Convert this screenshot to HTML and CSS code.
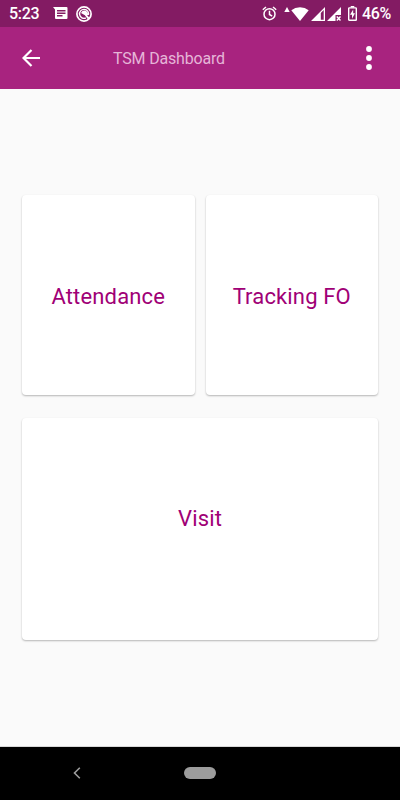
FILE: index.html
```html
<!DOCTYPE html>
<html lang="en">
<head>
  <meta charset="utf-8">
  <meta name="viewport" content="width=device-width, initial-scale=1">
  <title>TSM Dashboard</title>
  <link rel="stylesheet" href="styles.css">
</head>
<body>
  <div class="status-bar">
    <span class="time">5:23</span>
    <svg class="icon-message" width="15" height="13" viewBox="0 0 15 13">
      <path fill="#fff" fill-rule="evenodd" d="M0 0h13.5q1 0 1 1v10q0 1-1 1H3q-1 0-1-1V2.500zM4 3v1.400h8.500V3zM4 5.500v1.400h8.500V5.500zM4 8v1.400h5.500V8z"/>
    </svg>
    <svg class="icon-target" width="16" height="16" viewBox="0 0 16 16" fill="none" stroke="#fff">
      <circle cx="8" cy="8" r="7.100" stroke-width="1.700"/>
      <path d="M9.800 12A4.500 4.500 0 1 1 12.400 9" stroke-width="1.400"/>
      <path d="M5 7Q6.500 4 9.500 4.700q2.800 1.200 2.500 4.300H8.500zM8 8l1.500-1 4 5-1.500 1.500z" fill="#fff" stroke="none"/>
    </svg>

    <div class="status-right">
      <svg class="icon-alarm" width="15" height="15" viewBox="0 0 15 15" fill="none" stroke="#fff" stroke-width="1.500">
        <circle cx="7.500" cy="8.200" r="5.500"/>
        <path d="M7.500 4.800v3.700l2.700 1.600M.8 3.700L4 1M14.200 3.700L11 1"/>
      </svg>
      <svg class="icon-up" width="6" height="5" viewBox="0 0 6 5">
        <path fill="#fff" d="M3 0l2.700 5H.3z"/>
      </svg>
      <svg class="icon-wifi" width="18" height="14" viewBox="0 0 18 14">
        <path fill="#fff" d="M9 14L.3 3.300Q4 .3 9 .3t8.700 3z"/>
      </svg>
      <svg class="icon-signal" width="14" height="14" viewBox="0 0 14 14">
        <path fill="#fff" fill-rule="evenodd" d="M0 14L14 0v14zM9.800 6v6.700h2.900V3.100z"/>
      </svg>
      <svg class="icon-signal" width="14" height="14" viewBox="0 0 14 14">
        <path fill="#fff" d="M0 14L14 0v8H8.500v6z"/>
        <path d="M9.800 9.500l3.700 4M13.500 9.500l-3.700 4" stroke="#fff" stroke-width="1.400"/>
      </svg>
      <svg class="icon-battery" width="9" height="15" viewBox="0 0 9 15">
        <path fill="#fff" d="M2.700 0h3.600v1.500h-3.600z"/>
        <rect x=".7" y="1.900" width="7.600" height="12.400" rx=".6" fill="none" stroke="#fff" stroke-width="1.400"/>
        <path fill="#fff" d="M5.200 3.500L2 8.700h2v4l3-5.400H5.200z"/>
      </svg>
      <span class="battery">46%</span>
    </div>
  </div>

  <div class="toolbar">
    <svg class="back" width="18" height="18" viewBox="0 0 18 18" fill="none" stroke="#fff" stroke-width="2.200">
      <path d="M18 9H1.500M9.500 1L1.500 9l8 8"/>
    </svg>
    <h1 class="title">TSM Dashboard</h1>
    <svg class="more" width="6" height="24" viewBox="0 0 6 24" fill="#fff">
      <circle cx="3" cy="3" r="2.900"/>
      <circle cx="3" cy="12" r="2.900"/>
      <circle cx="3" cy="21" r="2.900"/>
    </svg>
  </div>

  <div class="dashboard">
    <div class="card">Attendance</div>
    <div class="card">Tracking FO</div>
    <div class="card card-wide">Visit</div>
  </div>

  <div class="nav-bar">
    <svg class="nav-back" width="8" height="12" viewBox="0 0 8 12" fill="none" stroke="#9c9c9c" stroke-width="1.600">
      <path d="M6.800 .8L1.500 6l5.300 5.200"/>
    </svg>
    <div class="nav-home"></div>
  </div>
</body>
</html>
```

FILE: styles.css
```css
* {
  box-sizing: border-box;
}

body {
  margin: 0;
  height: 800px;
  display: flex;
  flex-direction: column;
  background: #fafafa;
  font-family: Roboto, sans-serif;
  overflow: hidden;
}

svg {
  display: block;
  flex: none;
}

.status-bar {
  height: 27px;
  display: flex;
  align-items: center;
  padding: 0 9px;
  background: #831b63;
  color: #fff;
  font-size: 16px;
  font-weight: 500;
  line-height: 27px;
}

.time {
  width: 44px;
  letter-spacing: -0.3px;
}

.icon-target {
  margin-left: 8px;
}

.status-right {
  display: flex;
  align-items: center;
  margin-left: auto;
}

.icon-up {
  margin: 0 1px 9px 7px;
}

.icon-signal {
  margin-left: 2px;
}

.icon-battery {
  margin: 0 5px 0 7px;
}

.battery {
  width: 29px;
  letter-spacing: -0.3px;
  white-space: nowrap;
}

.toolbar {
  height: 62px;
  display: flex;
  align-items: center;
  padding: 0 28px 0 22px;
  background: #a8237f;
}

.title {
  margin: 0 0 0 73px;
  color: #e5b5d7;
  font-size: 16px;
  font-weight: 400;
  letter-spacing: -0.18px;
}

.more {
  margin-left: auto;
}

.dashboard {
  flex: 1;
  display: grid;
  grid-template-columns: 1fr 1fr;
  grid-template-rows: 200px 222px;
  gap: 23px 11px;
  padding: 106px 22px 0;
  border-bottom: 1px solid #d8d8d8;
}

.card {
  display: flex;
  align-items: center;
  justify-content: center;
  padding-top: 3px;
  background: #fff;
  border-radius: 4px;
  box-shadow: 0 1px 2px rgba(0, 0, 0, 0.28);
  color: #a00076;
  font-size: 22px;
  letter-spacing: 0.15px;
}

.card-wide {
  grid-column: span 2;
  padding: 0 0 21px;
}

.nav-bar {
  height: 53px;
  display: flex;
  align-items: center;
  padding: 0 0 1px 73px;
  background: #000;
}

.nav-home {
  width: 32px;
  height: 12px;
  margin-left: 103px;
  border-radius: 6px;
  background: #9c9c9c;
}
```
